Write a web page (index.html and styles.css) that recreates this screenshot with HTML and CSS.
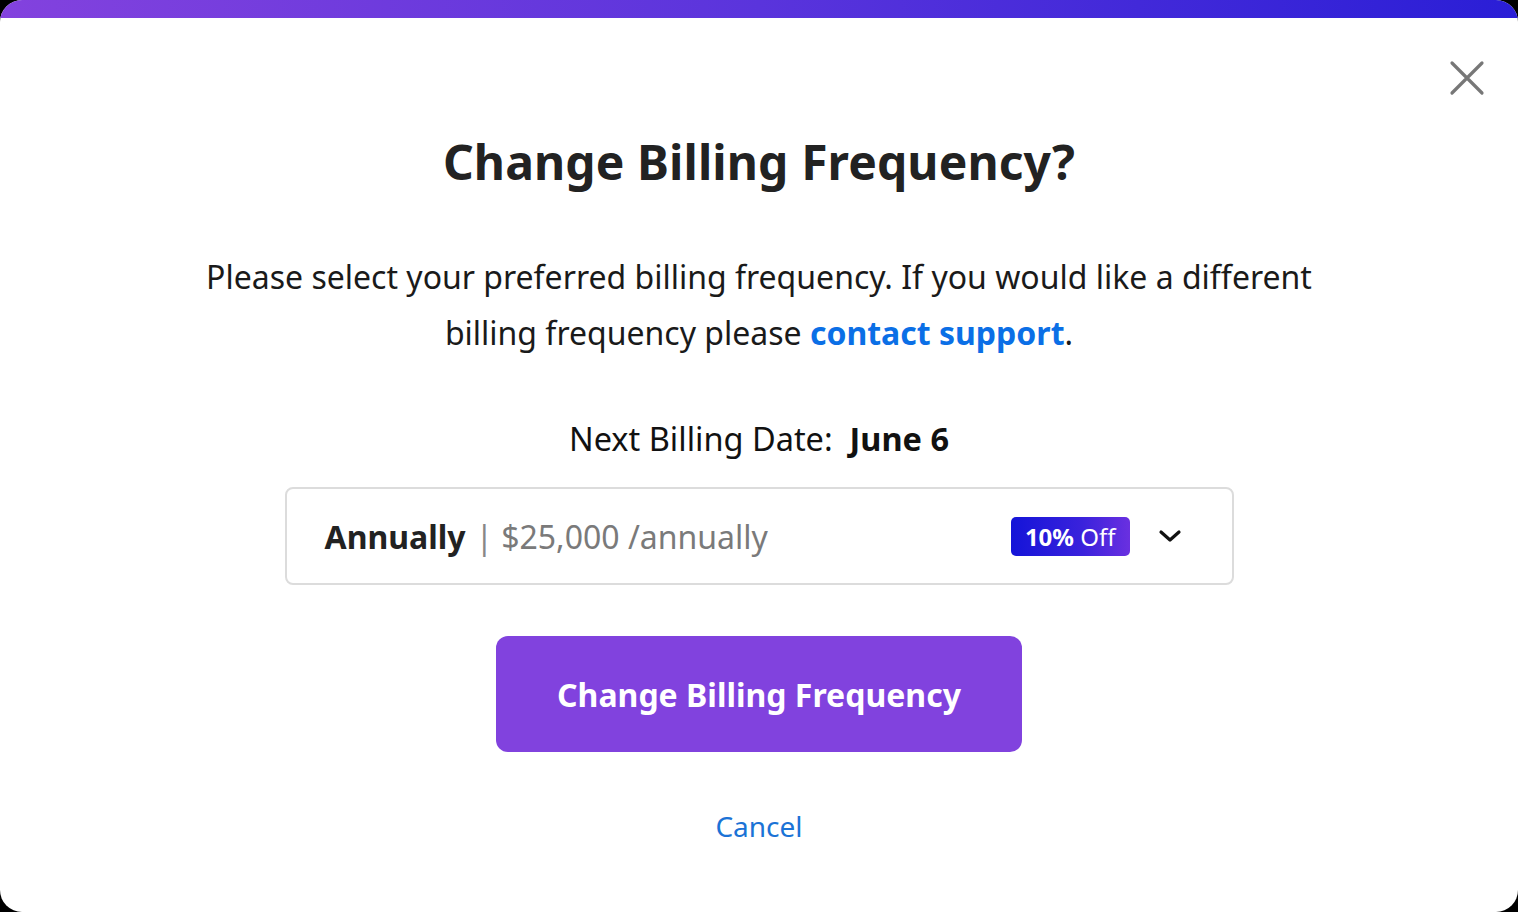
FILE: index.html
```html
<!DOCTYPE html>
<html lang="en">
<head>
<meta charset="utf-8">
<title>Change Billing Frequency</title>
<link rel="stylesheet" href="styles.css">
</head>
<body>
<div class="modal">
  <div class="topbar"></div>
  <div class="header">
    <button class="close" aria-label="Close">
      <svg width="36" height="36" viewBox="0 0 36 36"><path d="M3 3 L33 33 M33 3 L3 33" stroke="#777" stroke-width="3.2" stroke-linecap="round" fill="none"/></svg>
    </button>
  </div>
  <div class="content">
    <h1 class="title">Change Billing Frequency?</h1>
    <p class="desc">Please select your preferred billing frequency. If you would like a different<br>billing frequency please <a class="link" href="#">contact support</a>.</p>
    <div class="next">Next Billing Date:&nbsp; <b>June 6</b></div>
    <div class="select">
      <span class="plan">Annually</span>
      <span class="sep">|</span>
      <span class="price">$25,000 /annually</span>
      <span class="badge"><b>10%</b> Off</span>
      <svg class="chev" width="24" height="16" viewBox="0 0 24 16"><path d="M3 4 L12 12 L21 4" stroke="#111" stroke-width="3.2" stroke-linecap="round" stroke-linejoin="round" fill="none"/></svg>
    </div>
    <button class="primary">Change Billing Frequency</button>
    <a class="cancel" href="#">Cancel</a>
  </div>
</div>
</body>
</html>
```

FILE: styles.css
```css
html, body {
  margin: 0;
  padding: 0;
  background: #000;
}
body {
  font-family: "Noto Sans", "Open Sans", sans-serif;
  color: #1e1e1e;
}
.modal {
  width: 1518px;
  height: 912px;
  background: #fff;
  border-radius: 22px;
  overflow: hidden;
  display: flex;
  flex-direction: column;
}
.topbar {
  height: 18px;
  background: linear-gradient(90deg, #8342de 0%, #5a34dc 50%, #2a1ed6 100%);
  flex: none;
}
.header {
  display: flex;
  justify-content: flex-end;
  padding: 42px 33px 0 0;
  height: 40px;
}
.close {
  border: 0;
  background: none;
  padding: 0;
  width: 36px;
  height: 36px;
  cursor: pointer;
}
.content {
  display: flex;
  flex-direction: column;
  align-items: center;
}
.title {
  margin: 30px 0 0;
  font-size: 48px;
  font-weight: 700;
  line-height: 64px;
  color: #222;
  letter-spacing: 0.1px;
}
.desc {
  margin: 55px 0 0;
  font-size: 32px;
  line-height: 56px;
  text-align: center;
  color: #1a1a1a;
}
.link {
  color: #0b6fe6;
  font-weight: 700;
  text-decoration: none;
}
.next {
  margin-top: 56px;
  font-size: 32.5px;
  line-height: 44px;
  color: #111;
}
.next b {
  font-weight: 700;
}
.select {
  margin-top: 26px;
  border: 2px solid #dcdcdc;
  border-radius: 8px;
  display: flex;
  align-items: center;
  padding: 0 50px 0 38px;
  box-sizing: border-box;
  width: 949px;
  height: 98px;
}
.plan {
  font-size: 32px;
  font-weight: 700;
  color: #222;
}
.sep {
  font-size: 32px;
  color: #888;
  margin: 0 8px 0 10px;
}
.price {
  font-size: 32px;
  color: #7a7a7a;
  flex: 1;
}
.badge {
  background: linear-gradient(90deg, #1414d8 0%, #3a22dc 60%, #6a30e0 100%);
  color: #fff;
  font-size: 24px;
  line-height: 39px;
  height: 39px;
  padding: 0 14px;
  border-radius: 5px;
  margin-right: 28px;
}
.badge b {
  font-weight: 700;
}
.chev {
  display: block;
}
.primary {
  margin-top: 51px;
  width: 526px;
  height: 116px;
  border: 0;
  border-radius: 12px;
  background: #8142de;
  color: #fff;
  font-family: "Noto Sans", "Open Sans", sans-serif;
  font-size: 32px;
  font-weight: 700;
  cursor: pointer;
}
.cancel {
  margin-top: 55px;
  font-size: 28px;
  color: #1b73d6;
  text-decoration: none;
}
```
